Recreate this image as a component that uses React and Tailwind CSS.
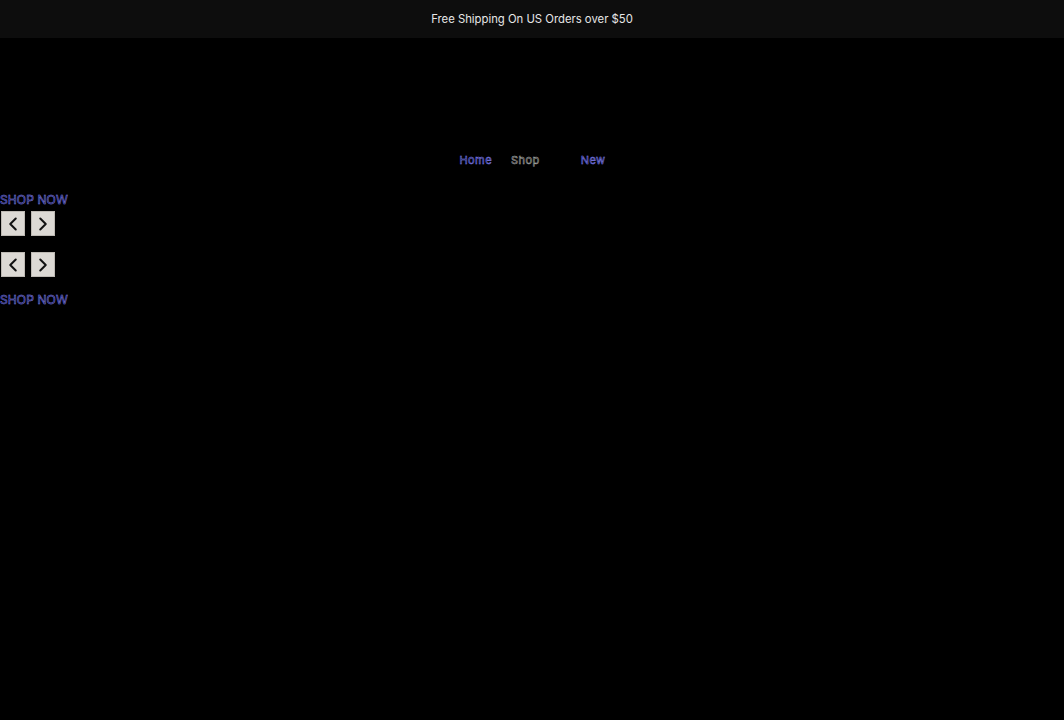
import { ChevronLeft, ChevronRight } from 'lucide-react';

const outline = 'text-transparent [-webkit-text-stroke:0.5px_#8585ff]';

const Arrows = () => (
  <div className="flex gap-[6px] pl-px">
    <button className="w-6 h-[25px] bg-[#dcd9d4] border border-[#bdb9b3] flex items-center justify-center">
      <ChevronLeft size={22} strokeWidth={2.2} color="#111" />
    </button>
    <button className="w-6 h-[25px] bg-[#dcd9d4] border border-[#bdb9b3] flex items-center justify-center">
      <ChevronRight size={22} strokeWidth={2.2} color="#111" />
    </button>
  </div>
);

const ShopNow = () => (
  <a className={`block text-[12px] leading-4 tracking-[0.01em] uppercase ${outline}`}>Shop now</a>
);

export default function App() {
  return (
    <div className="min-h-[720px] bg-black font-['Inter','Liberation_Sans',sans-serif]">
      {/* Announcement bar */}
      <div className="h-[38px] bg-[#0d0d0d] flex items-center justify-center">
        <p className="text-[11.3px] text-[#e6e6e6] pt-px">Free Shipping On US Orders over $50</p>
      </div>

      {/* Header */}
      <header className="h-[136px] flex items-end justify-center pb-[6px]">
        <nav className="flex items-center text-[11px] tracking-[0.04em] ml-[1px]">
          <a className={outline}>Home</a>
          <a className="ml-[19px] text-transparent [-webkit-text-stroke:0.5px_#b5b5b5]">Shop</a>
          <a className={`ml-[41px] ${outline}`}>New</a>
        </nav>
      </header>

      {/* Slideshows */}
      <section className="pt-[18px]">
        <ShopNow />
        <div className="mt-[3px]"><Arrows /></div>
        <div className="mt-[16px]"><Arrows /></div>
        <div className="mt-[15px]"><ShopNow /></div>
      </section>
    </div>
  );
}
